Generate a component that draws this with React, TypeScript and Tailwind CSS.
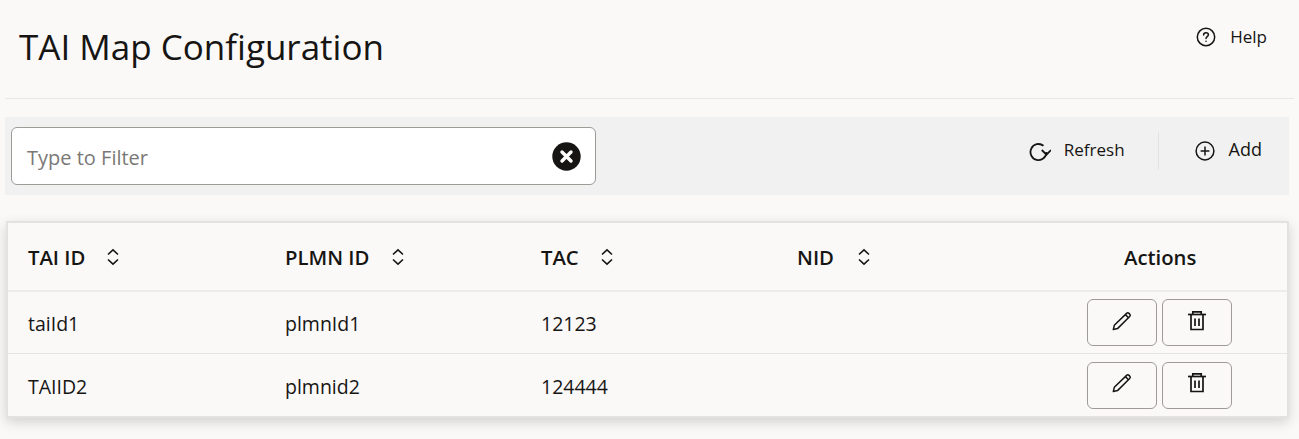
import React from 'react';

const font = 'font-["Open_Sans","Noto_Sans",sans-serif]';

function HelpIcon() {
  return (
    <svg width="20" height="20" viewBox="0 0 20 20" fill="none" stroke="#161513" strokeWidth="1.5" strokeLinecap="round">
      <circle cx="10" cy="10" r="8.7" />
      <path d="M7.6 8c0-1.4 1.1-2.3 2.4-2.3s2.4.9 2.4 2.1c0 1.8-2.4 1.8-2.4 3.6" />
      <path d="M10 14.2v.1" />
    </svg>
  );
}

function RefreshIcon() {
  return (
    <svg width="22" height="20" viewBox="0 0 22 20" fill="none" stroke="#161513" strokeWidth="1.8">
      <path d="M17.5 11A8 8 0 1 1 14.5 4.8" />
      <path d="M12.8 9l4.7 4.7L22 9" />
    </svg>
  );
}

function AddIcon() {
  return (
    <svg width="20" height="20" viewBox="0 0 20 20" fill="none" stroke="#161513" strokeWidth="1.5">
      <circle cx="10" cy="10" r="8.9" />
      <path d="M10 5.6v8.8M5.6 10h8.8" />
    </svg>
  );
}

function ClearIcon() {
  return (
    <svg width="29" height="29" viewBox="0 0 29 29">
      <circle cx="14.5" cy="14.5" r="14.2" fill="#161513" />
      <path d="M10 10l9 9M19 10l-9 9" stroke="#fff" strokeWidth="3.4" strokeLinecap="round" />
    </svg>
  );
}

function SortIcon() {
  return (
    <svg width="14" height="18" viewBox="0 0 14 18" fill="none" stroke="#161513" strokeWidth="1.6">
      <path d="M2 6.5L7 1.8l5 4.7" />
      <path d="M2 11.5l5 4.7 5-4.7" />
    </svg>
  );
}

function PencilIcon() {
  return (
    <svg width="20" height="20" viewBox="0 0 20 20" fill="none" stroke="#161513" strokeWidth="1.5" strokeLinejoin="round">
      <path d="M1.3 18.6l1-4.3L14.6 2.4a1.7 1.7 0 0 1 2.4 0l.7.7a1.7 1.7 0 0 1 0 2.4L5.5 17.6z" />
      <path d="M13.4 3.6l3.1 3.1" />
    </svg>
  );
}

function TrashIcon() {
  return (
    <svg width="18" height="20" viewBox="0 0 18 20" fill="none" stroke="#161513" strokeWidth="1.7">
      <path d="M0 3.5h18" />
      <path d="M4.8 3.5V0.9h8.4v2.6" />
      <path d="M3 3.5v15h12v-15" />
      <path d="M7 7.5v7.5M11 7.5v7.5" />
    </svg>
  );
}

function ActionButton({ children }: { children: React.ReactNode }) {
  return (
    <button className="flex h-[47px] w-[70px] items-center justify-center rounded-md border border-[#9e9b97] pb-[4px]">
      {children}
    </button>
  );
}

const columns = ['TAI ID', 'PLMN ID', 'TAC', 'NID'];
const sortGaps = ['ml-[21px]', 'ml-[22px]', 'ml-[21px]', 'ml-[23px]'];
const rows = [
  { taiId: 'taiId1', plmnId: 'plmnId1', tac: '12123', nid: '' },
  { taiId: 'TAIID2', plmnId: 'plmnid2', tac: '124444', nid: '' },
];

export default function App() {
  return (
    <div className={`${font} h-[439px] w-[1299px] overflow-hidden bg-[#fbf9f8] text-[#161513]`}>
      <header className="mx-[5px] flex h-[99px] items-start justify-between border-b border-[#e9e7e4]">
        <h1 className="mt-[21px] ml-[14px] text-[35px] leading-[52px] font-normal">TAI Map Configuration</h1>
        <div className="mt-[27px] mr-[27px] flex items-center gap-[14px] text-[17px] leading-[20px]">
          <HelpIcon />
          <span>Help</span>
        </div>
      </header>

      <div className="mx-[5px] mt-[18px] flex h-[78px] w-[1284px] items-center justify-between bg-[#f1f1f1] pr-[27px] pl-[6px]">
        <div className="flex h-[58px] w-[585px] items-center justify-between rounded-md border border-[#9e9b97] bg-white pr-[14px] pl-[15px]">
          <span className="pt-[4px] text-[20px] text-[#7a7876]">Type to Filter</span>
          <ClearIcon />
        </div>
        <div className="mb-[10px] flex items-center text-[17px]">
          <div className="flex items-center gap-[13px]">
            <RefreshIcon />
            <span className="-mt-[3px]">Refresh</span>
          </div>
          <div className="mr-[36px] ml-[33px] h-[38px] w-px bg-[#e4e3e1]" />
          <div className="flex items-center gap-[14px]">
            <AddIcon />
            <span className="-mt-[3px] text-[18px]">Add</span>
          </div>
        </div>
      </div>

      <div className="mt-[26px] ml-[6px] w-[1283px] border-2 border-[#e3e2df] shadow-[0_4px_12px_rgba(0,0,0,0.16)]">
        <div className="grid h-[69px] grid-cols-[257px_256px_256px_256px_1fr] items-center border-b-2 border-[#eeecea] pl-[20px] text-[20.3px] font-semibold">
          {columns.map((col, i) => (
            <div key={col} className="flex items-center">
              <span className="pt-[2px]">{col}</span>
              <span className={`${sortGaps[i]} flex`}>
                <SortIcon />
              </span>
            </div>
          ))}
          <div className="pl-[71px] pt-[2px]">Actions</div>
        </div>
        {rows.map((row, i) => (
          <div
            key={row.taiId}
            className={`grid h-[62px] grid-cols-[257px_256px_256px_256px_1fr] items-center pl-[20px] text-[19.5px] ${
              i === 0 ? 'border-b border-[#e6e4e2]' : ''
            }`}
          >
            <div className="pt-[3px]">{row.taiId}</div>
            <div className="pt-[3px]">{row.plmnId}</div>
            <div className="pt-[3px]">{row.tac}</div>
            <div>{row.nid}</div>
            <div className="flex gap-[5px] pl-[34px]">
              <ActionButton>
                <PencilIcon />
              </ActionButton>
              <ActionButton>
                <TrashIcon />
              </ActionButton>
            </div>
          </div>
        ))}
      </div>
    </div>
  );
}
